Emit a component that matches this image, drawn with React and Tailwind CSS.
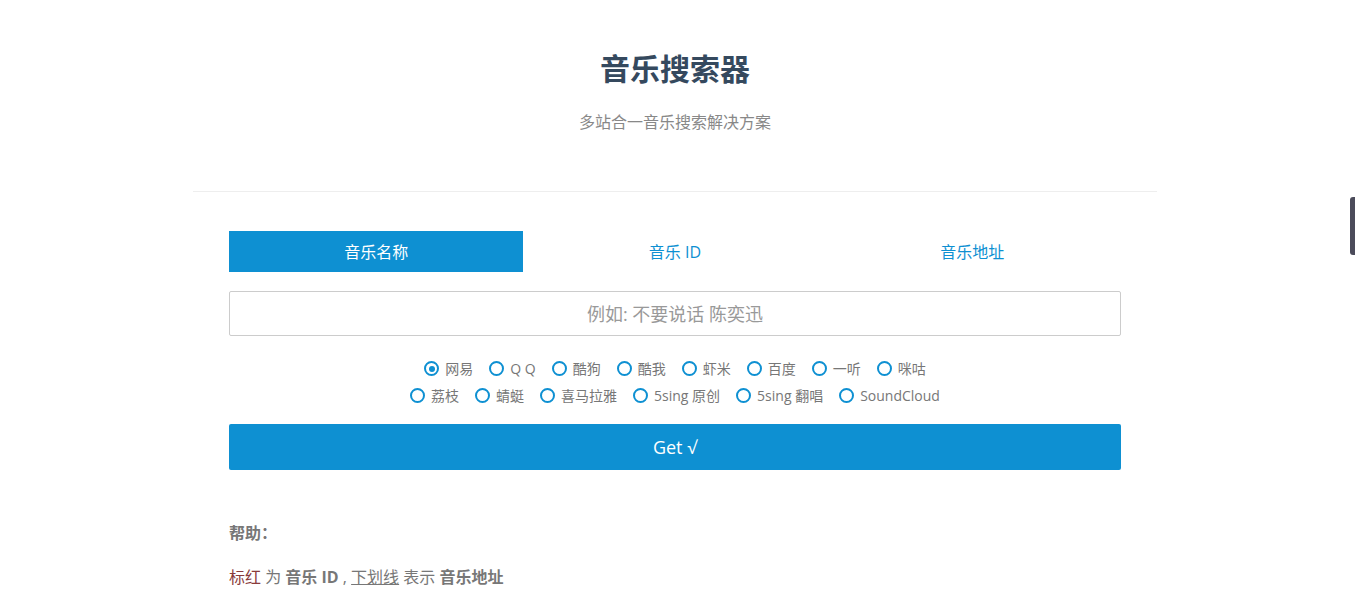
import React from "react";

const F = { fontFamily: '"Open Sans", "Noto Sans CJK SC", sans-serif' };

function Radio({ label, checked }) {
  return (
    <label className="flex items-center gap-[6px] text-[14px] text-[#777] leading-none">
      <span className="w-[15px] h-[15px] rounded-full border-2 border-[#0e90d2] flex items-center justify-center">
        {checked && <span className="w-[6px] h-[6px] rounded-full bg-[#0e90d2]" />}
      </span>
      <span>{label}</span>
    </label>
  );
}

export default function App() {
  const row1 = ["网易", "Q Q", "酷狗", "酷我", "虾米", "百度", "一听", "咪咕"];
  const row2 = ["荔枝", "蜻蜓", "喜马拉雅", "5sing 原创", "5sing 翻唱", "SoundCloud"];
  return (
    <div className="relative w-full min-h-[604px] bg-white overflow-hidden pr-[5px]" style={F}>
      <div className="w-[964px] mx-auto">
        <div className="pt-[48px] pb-[58px] text-center">
          <h1 className="text-[30px] font-bold text-[#35495e] leading-[42px]">音乐搜索器</h1>
          <p className="mt-[21px] text-[16px] text-[#888] leading-[22px]">多站合一音乐搜索解决方案</p>
        </div>
        <div className="border-t border-[#eee] px-[36px] pt-[39px]">
          <div className="grid grid-cols-3 h-[41px] text-[16px]">
            <div className="bg-[#0e90d2] text-white flex items-center justify-center mr-[3px]">音乐名称</div>
            <div className="text-[#0e90d2] flex items-center justify-center">音乐 ID</div>
            <div className="text-[#0e90d2] flex items-center justify-center">音乐地址</div>
          </div>
          <input
            className="mt-[19px] w-full h-[45px] border border-[#ccc] text-center text-[18px] outline-none placeholder:text-[#999] rounded-[2px]"
            placeholder="例如: 不要说话 陈奕迅"
            style={F}
          />
          <div className="mt-[25px] flex flex-col items-center gap-[12px]">
            <div className="flex gap-[16px]">
              {row1.map((l, i) => <Radio key={l} label={l} checked={i === 0} />)}
            </div>
            <div className="flex gap-[16px]">
              {row2.map((l) => <Radio key={l} label={l} />)}
            </div>
          </div>
          <button className="mt-[21px] w-full h-[46px] bg-[#0e90d2] text-white text-[18px] rounded-[2px]" style={F}>
            Get √
          </button>
          <div className="mt-[51px] text-[16px] text-[#777] font-bold">帮助：</div>
          <div className="mt-[20px] text-[16px] text-[#777]">
            <span className="text-[#8a3b3b]">标红</span> 为 <b>音乐 ID</b> , <span className="underline">下划线</span> 表示 <b>音乐地址</b>
          </div>
        </div>
      </div>
      <div className="absolute right-0 top-[197px] w-[5px] h-[58px] bg-[#4b4b5a] rounded-l-[3px]" />
    </div>
  );
}
